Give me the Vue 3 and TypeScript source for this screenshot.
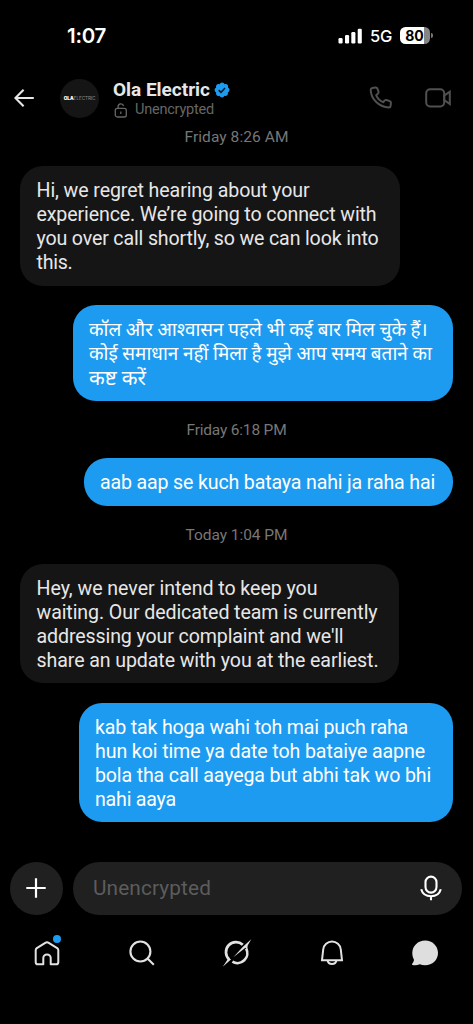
<script setup lang="ts">
import type { Directive } from 'vue'

interface Line { text: string; width: number }
interface Message { kind: 'in' | 'out'; width: number; hindi?: boolean; lines: Line[] }
interface Group { stamp: Line; messages: Message[] }

const groups: Group[] = [
  {
    stamp: { text: 'Friday 8:26 AM', width: 104 },
    messages: [
      {
        kind: 'in', width: 380, lines: [
          { text: 'Hi, we regret hearing about your', width: 273 },
          { text: 'experience. We’re going to connect with', width: 340 },
          { text: 'you over call shortly, so we can look into', width: 342 },
          { text: 'this.', width: 36 },
        ],
      },
      {
        kind: 'out', width: 380, hindi: true, lines: [
          { text: 'कॉल और आश्वासन पहले भी कई बार मिल चुके हैं।', width: 339 },
          { text: 'कोई समाधान नहीं मिला है मुझे आप समय बताने का', width: 343 },
          { text: 'कष्ट करें', width: 57 },
        ],
      },
    ],
  },
  {
    stamp: { text: 'Friday 6:18 PM', width: 100 },
    messages: [
      { kind: 'out', width: 369, lines: [{ text: 'aab aap se kuch bataya nahi ja raha hai', width: 335 }] },
    ],
  },
  {
    stamp: { text: 'Today 1:04 PM', width: 102 },
    messages: [
      {
        kind: 'in', width: 379, lines: [
          { text: 'Hey, we never intend to keep you', width: 281 },
          { text: 'waiting. Our dedicated team is currently', width: 341 },
          { text: "addressing your complaint and we'll", width: 307 },
          { text: 'share an update with you at the earliest.', width: 342 },
        ],
      },
      {
        kind: 'out', width: 374, lines: [
          { text: 'kab tak hoga wahi toh mai puch raha', width: 313 },
          { text: 'hun koi time ya date toh bataiye aapne', width: 330 },
          { text: 'bola tha call aayega but abhi tak wo bhi', width: 336 },
          { text: 'nahi aaya', width: 81 },
        ],
      },
    ],
  },
]

// Tracks a line of text so that it sets to the given measure.
const vFit: Directive<HTMLElement, number> = {
  mounted(el, { value }) {
    const natural = el.getBoundingClientRect().width
    const text = el.textContent ?? ''
    if (/[\u0900-\u097f]/.test(text)) {
      const size = parseFloat(getComputedStyle(el).fontSize)
      el.style.fontSize = `${(size * value) / natural}px`
    } else {
      el.style.letterSpacing = `${(value - natural) / text.length}px`
    }
  },
}
</script>

<template>
  <div class="screen">
    <div class="status">
      <span v-fit="39" class="clock">1:07</span>
      <div class="indicators">
        <svg width="25" height="16" viewBox="0 0 25 16" fill="#fff">
          <rect x="0.5" y="10" width="4.1" height="5.5" rx="1.2" />
          <rect x="7" y="7" width="4.1" height="8.5" rx="1.2" />
          <rect x="13.3" y="4" width="4.1" height="11.5" rx="1.2" />
          <rect x="19.7" y="0.8" width="4.1" height="14.7" rx="1.2" />
        </svg>
        <span v-fit="22" class="network">5G</span>
        <div class="battery"><span v-fit="18.5">80</span></div>
        <i class="nub"></i>
      </div>
    </div>

    <header class="header">
      <svg class="back" width="20" height="20" viewBox="0 0 20 20" fill="none" stroke="#e7e7e7" stroke-width="2.1">
        <path d="M19.8 10H1.500M9.600 1.700L1.400 10l8.200 8.300" />
      </svg>
      <div class="avatar"><b>OLA</b><span>ELECTRIC</span></div>
      <div class="who">
        <div class="name">
          <span v-fit="97">Ola Electric</span>
          <svg width="16" height="16" viewBox="1 1 20 20">
            <path fill="#1d9bf0" d="M20.4 11c0-.65-.2-1.27-.54-1.81a3.46 3.46 0 0 0-1.44-1.22c.22-.6.27-1.24.14-1.86a3.3 3.3 0 0 0-.88-1.69 3.3 3.3 0 0 0-1.69-.88 3.2 3.2 0 0 0-1.86.14 3.4 3.4 0 0 0-1.21-1.44A3.4 3.4 0 0 0 11 1.7a3.3 3.3 0 0 0-3.02 1.98 3.3 3.3 0 0 0-1.87-.14 3.3 3.3 0 0 0-1.69.88 3.3 3.3 0 0 0-.74 3.55c-.59.27-1.09.69-1.44 1.22A3.4 3.4 0 0 0 1.7 11a3.4 3.4 0 0 0 1.98 3.02 3.3 3.3 0 0 0 .74 3.55c.47.46 1.05.76 1.69.88a3.3 3.3 0 0 0 1.87-.14A3.3 3.3 0 0 0 11 20.3a3.3 3.3 0 0 0 3.03-1.99 3.2 3.2 0 0 0 3.53-.74 3.3 3.3 0 0 0 .74-3.55A3.3 3.3 0 0 0 20.4 11z" />
            <path fill="none" stroke="#071521" stroke-width="1.900" d="M6.900 11.200l2.800 2.800 5-5.600" />
          </svg>
        </div>
        <div class="sub">
          <svg width="14" height="15" viewBox="0 0 14 15" fill="none" stroke="#666" stroke-width="1.300">
            <rect x="1.3" y="5.4" width="11" height="8.6" rx="2" />
            <path d="M4.100 5.400V3.700a2.800 2.800 0 0 1 5.500-.7M6.800 8.600v2.300" />
          </svg>
          <span v-fit="79">Unencrypted</span>
        </div>
      </div>
      <svg class="phone" width="24" height="24" viewBox="0 0 24 24" fill="none" stroke="#505050" stroke-width="2" stroke-linejoin="round">
        <path d="M3.300 2.100L6.600 1.600c.9-.1 1.500.3 1.800 1.100l1.100 3c.2.700.1 1.200-.4 1.700L7.200 9.300c1.300 3 3.900 5.600 6.900 6.900l1.700-1.800c.5-.5 1.100-.6 1.700-.4l3.300 1.100c.8.3 1.200.9 1.100 1.700l-.3 3c-.1 1-.8 1.600-1.700 1.600C10.300 21.400 1.800 12.800 1.700 4c0-1 .6-1.700 1.600-1.900z" />
      </svg>
      <svg class="video" width="27" height="20" viewBox="0 0 27 20" fill="none" stroke="#505050" stroke-width="2">
        <rect x="1.2" y="1.2" width="18" height="17.2" rx="4" />
        <path d="M19.200 7.600l5.600-4v12.400l-5.600-4z" />
      </svg>
    </header>

    <main class="thread">
      <section v-for="g in groups" :key="g.stamp.text" class="group">
        <div class="stamp"><span v-fit="g.stamp.width">{{ g.stamp.text }}</span></div>
        <div
          v-for="(m, i) in g.messages"
          :key="i"
          class="bubble"
          :class="[m.kind, { hindi: m.hindi }]"
          :style="{ width: m.width + 'px' }"
        >
          <div v-for="l in m.lines" :key="l.text" class="line"><span v-fit="l.width">{{ l.text }}</span></div>
        </div>
      </section>
    </main>

    <div class="composer">
      <div class="plus">
        <svg width="20" height="20" viewBox="0 0 20 20" stroke="#fff" stroke-width="2.200"><path d="M10 .3v19.400M.3 10h19.400" /></svg>
      </div>
      <div class="field">
        <span v-fit="118">Unencrypted</span>
        <svg width="22" height="26" viewBox="0 0 22 26" fill="none" stroke="#fff" stroke-width="2.100">
          <rect x="5.5" y="1.6" width="11" height="16" rx="5.5" />
          <path d="M1.200 14.200c1.200 4.200 5 7 9.800 7s8.600-2.800 9.800-7M11 21.200v4" />
        </svg>
      </div>
    </div>

    <nav class="tabs">
      <div class="tab">
        <svg width="26" height="26" viewBox="0 0 26 26" fill="none" stroke="#e2e2e2" stroke-width="2" stroke-linejoin="round">
          <path d="M1.700 10.200c0-.9.400-1.600 1.100-2.100l8.500-5.300c1.100-.7 2.300-.7 3.400 0l8.500 5.300c.7.500 1.100 1.200 1.100 2.100v12c0 1.300-.8 2.100-2.100 2.100h-5.500v-6.200a3.700 3.700 0 0 0-7.400 0v6.200H3.800c-1.300 0-2.100-.8-2.100-2.100z" />
        </svg>
        <i class="dot"></i>
      </div>
      <div class="tab">
        <svg width="26" height="26" viewBox="0 0 26 26" fill="none" stroke="#e2e2e2" stroke-width="2.100">
          <circle cx="11.4" cy="11.5" r="10" /><path d="M18.500 18.600l6.300 6.200" />
        </svg>
      </div>
      <div class="tab">
        <svg class="orbit" width="30" height="28" viewBox="0 0 30 28">
          <g fill="none" stroke="#e2e2e2" stroke-width="2.700">
            <path d="M7.200 20.400A9.900 9.900 0 0 1 20.800 5.700" />
            <path d="M10.400 22.700A9.900 9.900 0 0 0 24.200 9.600" />
          </g>
          <path fill="#e2e2e2" d="M.8 27.800L6.200 19.600 9.200 20.200zM11.300 18.200L21.200 7.600 29.200.2 25.700 6.600 25.200 10.600 23.400 8.800z" />
        </svg>
      </div>
      <div class="tab">
        <svg class="bell" width="24" height="26" viewBox="0 0 24 26" fill="none" stroke="#e2e2e2" stroke-width="2">
          <path d="M2 20.200l1.200-10.700a8.850 8.850 0 0 1 17.600 0L22 20.200zM7.500 20.500a4.600 4.400 0 0 0 9 0" />
        </svg>
      </div>
      <div class="tab">
        <svg class="chat" width="28" height="26" viewBox="0 0 28 26" fill="#dedede">
          <path d="M14.200.5C21.500.5 27 6 27 13s-5.500 12.300-12.900 12.300c-1.900 0-3.700-.4-5.300-1.100-2.100.9-4.800 1.200-7.200.7-.7-.2-.8-.9-.3-1.400.9-1 1.600-2.300 1.700-3.700C2 17.900 1.300 15.600 1.300 13 1.300 6 6.900.5 14.200.5z" />
        </svg>
      </div>
    </nav>
  </div>
</template>

<style>
html, body { background: #000; }
</style>

<style scoped>
.screen {
  width: 473px; height: 1024px; box-sizing: border-box; overflow: hidden;
  display: flex; flex-direction: column; background: #000; color: #e7e7e7;
  font-family: Roboto, "Noto Sans", "Liberation Sans", sans-serif;
}
span { white-space: pre; display: inline-block; }
svg { display: block; flex: none; }
.status { height: 71px; box-sizing: border-box; padding: 0 40px 0 67px; display: flex; justify-content: space-between; align-items: center; color: #fff; }
.clock { font: 600 20.5px/24px Inter, sans-serif; }
.indicators { display: flex; align-items: center; }
.network { font: 500 16.5px/20px Inter, sans-serif; margin-left: 7px; }
.battery { width: 30px; height: 17px; margin-left: 8px; border-radius: 5.5px; background: linear-gradient(90deg, #fff 80%, #858585 80%); color: #000; text-align: center; }
.battery span { font: 700 14px/17px Inter, sans-serif; margin-right: 1px; vertical-align: top; }
.nub { width: 2px; height: 5px; margin-left: 1px; border-radius: 0 2px 2px 0; background: #777; }
.header { height: 54px; display: flex; align-items: center; padding-left: 14px; }
.back { margin-right: 26px; }
.avatar { width: 39px; height: 39px; flex: none; border-radius: 50%; background: #151515; display: flex; align-items: center; justify-content: center; font: 4.7px/6px Inter, sans-serif; color: #fff; }
.avatar b { font-weight: 900; }
.avatar span { color: #8b8b8b; letter-spacing: -.1px; }
.who { width: 130px; margin-left: 14px; padding-top: 2px; }
.name { display: flex; align-items: center; gap: 4px; height: 21px; font-size: 19px; font-weight: 700; line-height: 21px; margin-bottom: 1px; }
.sub { display: flex; align-items: center; gap: 7px; height: 18px; color: #666; font-size: 14.5px; line-height: 18px; padding-left: 1px; }
.phone { margin-left: 126px; }
.video { margin-left: 32px; }
.thread { height: 723px; }
.group { display: flex; flex-direction: column; }
.stamp { height: 18px; margin: 3px 0 20px; text-align: center; color: #777; font-size: 15.5px; line-height: 18px; }
.group + .group .stamp { margin: 20.25px 0 19.25px; }
.bubble { box-sizing: border-box; padding: 13px 16.5px 10.7px; border-radius: 23px; font-size: 19.6px; }
.bubble + .bubble { margin-top: 19.5px; }
.line { height: 24px; line-height: 24px; }
.in { margin-left: 20px; background: #151515; color: #e7e7e7; }
.out { align-self: flex-end; margin-right: 20.5px; background: #1d9bf0; color: #fff; }
.hindi { font-size: 18px; }
.composer { height: 80px; display: flex; align-items: center; gap: 10px; padding: 0 11px 0 10px; box-sizing: border-box; }
.plus { width: 53px; height: 53px; border-radius: 50%; background: #202020; display: flex; align-items: center; justify-content: center; }
.plus svg { margin-right: 1px; }
.field { flex: 1; height: 53px; box-sizing: border-box; border-radius: 27px; background: #202020; color: #5c5c5c; display: flex; align-items: center; justify-content: space-between; padding: 0 20px; font-size: 20.8px; }
.tabs { height: 50px; display: grid; grid-template-columns: repeat(5, 1fr); }
.tab { position: relative; display: flex; align-items: center; justify-content: center; }
.orbit { margin-left: 2px; }
.bell { margin-left: 2px; }
.chat { margin-right: 2px; }
.dot { position: absolute; top: 7px; left: 53px; width: 8px; height: 8px; border-radius: 50%; background: #1d9bf0; }
</style>
